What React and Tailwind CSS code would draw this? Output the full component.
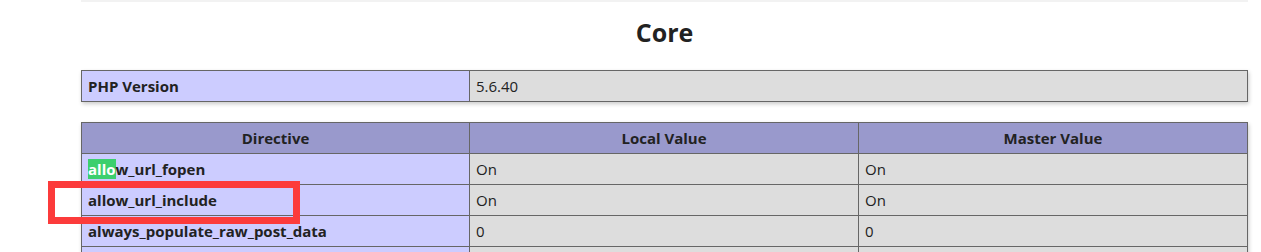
import React from 'react';

const rows = [
    { name: 'allow_url_fopen', local: 'On', master: 'On', hit: true },
    { name: 'allow_url_include', local: 'On', master: 'On' },
    { name: 'always_populate_raw_post_data', local: '0', master: '0' },
    { name: '', local: '', master: '' },
];

const font = { fontFamily: '"Open Sans", "Noto Sans", sans-serif' };

export default function App() {
    return (
        <div className="relative w-[1261px] h-[252px] overflow-hidden bg-white text-[#222]" style={font}>
            <div className="ml-[81px] w-[1167px]">
                <div className="h-[2px] bg-[#f2f2f2]" />

                <h2 className="h-[68px] pt-[12px] text-center text-[25px] leading-[36px] font-bold">
                    Core
                </h2>

                <table className="w-full border-collapse shadow-[1px_2px_4px_#ccc] text-[15px] leading-[20px]">
                    <tbody>
                        <tr>
                            <td className="w-[388px] border border-[#666] bg-[#ccccff] px-[6px] py-[5px] font-bold">PHP Version</td>
                            <td className="border border-[#666] bg-[#dddddd] px-[6px] py-[5px]">5.6.40</td>
                        </tr>
                    </tbody>
                </table>

                <table className="mt-[20px] w-full border-collapse shadow-[1px_2px_4px_#ccc] text-[15px] leading-[20px]">
                    <thead>
                        <tr className="bg-[#9999cc]">
                            <th className="w-[388px] border border-[#666] px-[6px] py-[5px] font-bold text-center">Directive</th>
                            <th className="w-[389px] border border-[#666] px-[6px] py-[5px] font-bold text-center">Local Value</th>
                            <th className="border border-[#666] px-[6px] py-[5px] font-bold text-center">Master Value</th>
                        </tr>
                    </thead>
                    <tbody>
                        {rows.map((r, i) => (
                            <tr key={i} className="h-[31px]">
                                <td className="border border-[#666] bg-[#ccccff] px-[6px] py-[5px] font-bold">
                                    {r.hit ? (
                                        <>
                                            <span className="bg-[#3ccf6e] text-white">allo</span>
                                            {r.name.slice(4)}
                                        </>
                                    ) : (
                                        r.name
                                    )}
                                </td>
                                <td className="border border-[#666] bg-[#dddddd] px-[6px] py-[5px]">{r.local}</td>
                                <td className="border border-[#666] bg-[#dddddd] px-[6px] py-[5px]">{r.master}</td>
                            </tr>
                        ))}
                    </tbody>
                </table>
            </div>

            {/* annotation box */}
            <div className="absolute left-[48px] top-[181px] w-[252px] h-[43px] border-[7px] border-[#fc3b3b]" />
        </div>
    );
}
